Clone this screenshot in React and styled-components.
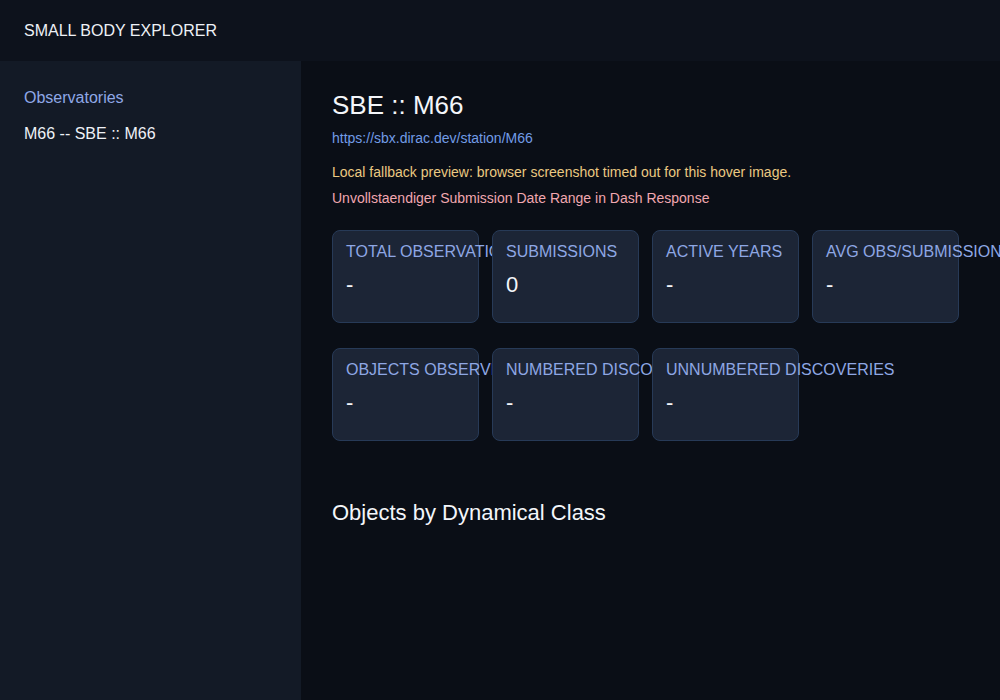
import React from "react";
import styled, { createGlobalStyle } from "styled-components";

const Global = createGlobalStyle`
  html, body { margin: 0; padding: 0; background: #0a0e16; overflow: hidden; }
  body { font-family: "Liberation Sans", Arial, sans-serif; color: #eef1f6; }
  * { box-sizing: border-box; }
`;

const Shell = styled.div`
  display: flex;
  flex-direction: column;
  height: 100vh;
`;

const Header = styled.header`
  height: 61px;
  flex: 0 0 61px;
  display: flex;
  align-items: center;
  padding: 1px 24px 0;
  background: #0d121c;
  font-size: 16px;
  line-height: 20px;
  color: #eef1f6;
`;

const Body = styled.div`
  flex: 1;
  display: flex;
  min-height: 0;
`;

const Sidebar = styled.aside`
  width: 301px;
  flex: 0 0 301px;
  background: #131a26;
  padding: 27px 24px;
  display: flex;
  flex-direction: column;
  gap: 16px;
`;

const NavLink = styled.a`
  font-size: 16px;
  line-height: 20px;
  color: ${(p) => (p.$muted ? "#8fa8e6" : "#eef1f6")};
  text-decoration: none;
`;

const Main = styled.main`
  flex: 1;
  min-width: 0;
  padding: 28px 31px;
  overflow: hidden;
`;

const Title = styled.h1`
  margin: 0;
  font-size: 26px;
  line-height: 32px;
  font-weight: 400;
  color: #f4f6fa;
`;

const Url = styled.a`
  display: block;
  margin-top: 7px;
  font-size: 14px;
  line-height: 20px;
  color: #729ce6;
  text-decoration: none;
`;

const Notice = styled.div`
  margin-top: ${(p) => p.$mt}px;
  font-size: 14px;
  line-height: 20px;
  color: ${(p) => p.$color};
`;

const CardRow = styled.div`
  display: flex;
  gap: 13px;
  margin-top: ${(p) => p.$mt}px;
`;

const Card = styled.div`
  width: 147px;
  height: 93px;
  flex: 0 0 147px;
  background: #1c2536;
  border: 1px solid #273a57;
  border-radius: 8px;
  padding: 12px 13px;
  white-space: nowrap;
`;

const Label = styled.div`
  font-size: 16px;
  line-height: 18px;
  color: #8ea7e4;
`;

const Value = styled.div`
  margin-top: 11px;
  font-size: 22px;
  line-height: 25px;
  color: #f4f6fa;
`;

const Section = styled.h2`
  margin: 59px 0 0;
  font-size: 22px;
  line-height: 25px;
  font-weight: 400;
  color: #f4f6fa;
`;

const row1 = [
  ["TOTAL OBSERVATIONS", "-"],
  ["SUBMISSIONS", "0"],
  ["ACTIVE YEARS", "-"],
  ["AVG OBS/SUBMISSIONS", "-"],
];
const row2 = [
  ["OBJECTS OBSERVED", "-"],
  ["NUMBERED DISCOVERIES", "-"],
  ["UNNUMBERED DISCOVERIES", "-"],
];

export default function App() {
  return (
    <Shell>
      <Global />
      <Header>SMALL BODY EXPLORER</Header>
      <Body>
        <Sidebar>
          <NavLink $muted href="#">Observatories</NavLink>
          <NavLink href="#">M66 -- SBE :: M66</NavLink>
        </Sidebar>
        <Main>
          <Title>SBE :: M66</Title>
          <Url href="#">https://sbx.dirac.dev/station/M66</Url>
          <Notice $mt={14} $color="#ebc982">
            Local fallback preview: browser screenshot timed out for this hover image.
          </Notice>
          <Notice $mt={6} $color="#f1a7b0">
            Unvollstaendiger Submission Date Range in Dash Response
          </Notice>
          <CardRow $mt={22}>
            {row1.map(([l, v]) => (
              <Card key={l}>
                <Label>{l}</Label>
                <Value>{v}</Value>
              </Card>
            ))}
          </CardRow>
          <CardRow $mt={25}>
            {row2.map(([l, v]) => (
              <Card key={l}>
                <Label>{l}</Label>
                <Value>{v}</Value>
              </Card>
            ))}
          </CardRow>
          <Section>Objects by Dynamical Class</Section>
        </Main>
      </Body>
    </Shell>
  );
}
